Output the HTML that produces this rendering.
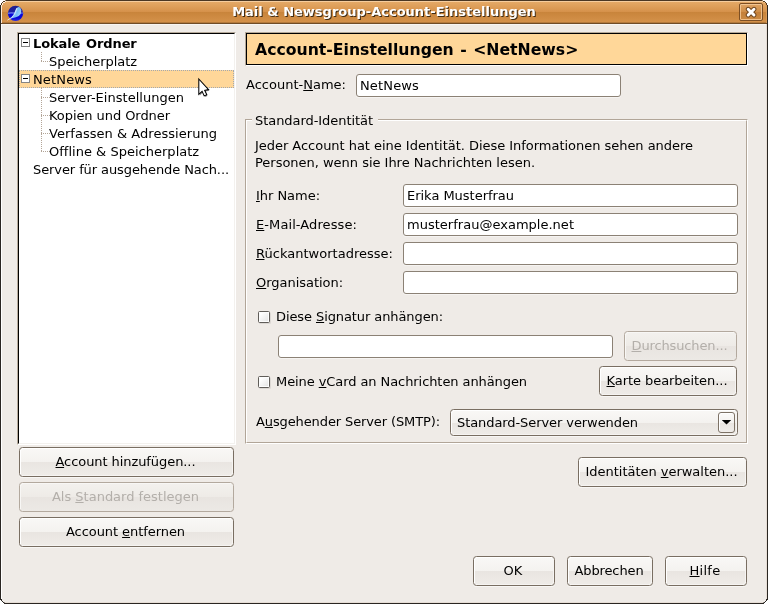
<!DOCTYPE html>
<html lang="de">
<head>
<meta charset="utf-8">
<title>Mail &amp; Newsgroup-Account-Einstellungen</title>
<style>
html,body{margin:0;padding:0;background:#fff;}
body{width:768px;height:604px;overflow:hidden;position:relative;
 font-family:"DejaVu Sans","Liberation Sans",sans-serif;font-size:13px;color:#000;
 -webkit-font-smoothing:antialiased;}
*{box-sizing:border-box;}
.abs{position:absolute;}
#txt{position:absolute;left:0;top:0;width:768px;height:604px;will-change:transform;}
#win{position:absolute;left:0;top:0;width:768px;height:604px;background:#efebe7;
 overflow:hidden;}
#frame{position:absolute;left:0;top:0;z-index:50;pointer-events:none;}
#frame2{position:absolute;left:1px;top:24px;width:766px;height:579px;
 border-left:1px solid #fff;border-right:1px solid #e6ddd5;border-bottom:1px solid #e6ddd5;z-index:40;}
#tbar{position:absolute;left:0;top:0;width:768px;height:24px;
 background:linear-gradient(to bottom,#4a3520 0,#4a3520 1px,#f6cd9d 1px,#f6cd9d 2px,#e4a966 2px,#d5914a 12px,#c8843b 12px,#d4914a 22px,#b47a3c 22px,#b47a3c 23px,#6f4c27 23px,#6f4c27 24px);}
#hl{position:absolute;left:1px;top:24px;width:766px;height:1px;background:#f7f5f3;}
#title{position:absolute;left:0;top:3px;width:768px;text-align:center;font-weight:bold;font-size:13px;color:#fff;
 text-shadow:1px 1px 0 #3f2c16;line-height:17px;white-space:nowrap;}
.t{position:absolute;white-space:nowrap;line-height:18px;height:18px;}
u{text-decoration:underline;text-underline-offset:1px;text-decoration-thickness:1px;}
/* tree */
#tree{position:absolute;left:17px;top:32px;width:219px;height:413px;background:#fff;
 border-top:1px solid #b5a999;border-left:1px solid #b5a999;border-right:1px solid #fff;border-bottom:1px solid #fff;}
#tree .in{position:absolute;left:0;top:0;right:0;bottom:0;border-top:1px solid #000;border-left:1px solid #000;
 border-right:1px solid #f3f1ee;border-bottom:1px solid #f3f1ee;}
.row{position:absolute;left:19px;width:215px;height:18px;}
.sel{background:#ffd799;border:1px dotted #a4a8ae;}
.exp{position:absolute;width:9px;height:9px;border:1px solid #848484;background:#fff;}
.exp i{position:absolute;left:1px;top:3px;width:5px;height:1px;background:#000;}
.dotv{position:absolute;width:1px;background-image:linear-gradient(to bottom,#b3a597 1px,transparent 1px);background-size:1px 2px;}
.doth{position:absolute;height:1px;background-image:linear-gradient(to right,#b3a597 1px,transparent 1px);background-size:2px 1px;}
/* buttons */
.btn{position:absolute;border:1px solid #796e62;border-radius:3.5px;text-align:center;white-space:nowrap;
 background:linear-gradient(to bottom,#f9f8f6 0,#f4f2ef 50%,#e9e5e1 50%,#efece8 100%);
 box-shadow:inset 1px 1px 0 #fff,inset -1px -1px 0 #f6f4f2,0 1px 0 #f8f7f5;}
.btn span{position:absolute;left:-1px;right:1px;white-space:nowrap;line-height:18px;}
.btn.dis{border-color:#b3a99e;color:#b3afaa;background:linear-gradient(to bottom,#f3f1ee 0,#eeebe7 50%,#e8e4e0 50%,#ece9e5 100%);box-shadow:inset 1px 1px 0 #f8f7f5;}
/* entries */
.ent{position:absolute;background:#fff;border:1px solid #8b8175;border-radius:3px;
 box-shadow:0 1px 0 #f6f4f2;}
.ent span{position:absolute;left:3px;white-space:nowrap;line-height:18px;}
.chk{position:absolute;width:12px;height:12px;border:1px solid #605d59;border-radius:1.5px;
 background:linear-gradient(135deg,#fff 20%,#e2e2e2 100%);box-shadow:inset 0 0 0 1px #fdfdfd,1px 1px 0 rgba(0,0,0,.08);}
/* header */
#hdr{position:absolute;left:245px;top:32px;width:503px;height:34px;
 border-top:1px solid #b5a999;border-left:1px solid #b5a999;border-right:1px solid #fff;border-bottom:1px solid #fff;}
#hdr .in{position:absolute;left:0;top:0;right:0;bottom:0;border:1px solid #000;background:#ffd799;}
#hdr span{position:absolute;left:9px;top:7px;letter-spacing:0;word-spacing:1px;font-weight:bold;font-size:15.7px;line-height:20px;white-space:nowrap;}
/* groupbox */
#grp{position:absolute;left:245px;top:119px;width:503px;height:325px;border:1px solid;border-color:#b1a598 #fff #fff #b1a598;}
#grp .in{position:absolute;left:0;top:0;right:0;bottom:0;border:1px solid;border-color:#fff #b1a598 #b1a598 #fff;}
#grplab{position:absolute;left:252px;top:112px;padding:0 5px 0 3px;background:#efebe7;line-height:18px;white-space:nowrap;}
</style>
</head>
<body>
<div id="win"><div id="txt">
 <div id="tbar"></div>
 <div id="hl"></div>
 <div class="abs" style="left:1px;top:1px;width:766px;height:22px;border-left:1px solid #fbead6;border-top:1px solid #f6cd9d;border-right:1px solid #d79a58;border-radius:5px 5px 0 0"></div>
 <div id="title">Mail &amp; Newsgroup-Account-Einstellungen</div>

 <!-- app icon -->
 <svg class="abs" style="left:0;top:0" width="28" height="24" viewBox="0 0 28 24">
  <defs>
   <linearGradient id="g1" x1="0" y1="0" x2="0" y2="1"><stop offset="0" stop-color="#20208e"/><stop offset="0.44" stop-color="#1d1da6"/><stop offset="0.5" stop-color="#0606dc"/><stop offset="0.8" stop-color="#0808d8"/><stop offset="1" stop-color="#2a2ae0"/></linearGradient>
   <linearGradient id="g2" x1="0" y1="0.2" x2="1" y2="0.6"><stop offset="0" stop-color="#e6f5ff"/><stop offset="0.35" stop-color="#a6d8fb"/><stop offset="0.7" stop-color="#78bcf6"/><stop offset="1" stop-color="#a8d6fa"/></linearGradient>
   <clipPath id="cc"><circle cx="15.5" cy="13.3" r="7.65"/></clipPath>
  </defs>
  <circle cx="15.5" cy="13.3" r="7.65" fill="url(#g1)"/>
  <path clip-path="url(#cc)" d="M7 12.7 Q11 11.9 15 12.6 L24 12.4 L24 13.6 L15 13.8 Q11 13.1 7 13.9Z" fill="#7f92f0" opacity="0.9"/>
  <path d="M7.2 20.4 Q11 18.6 13.2 15.4 Q14.6 12.5 15.4 10 Q16.2 7.2 18.6 6.9 Q20.8 7.2 21.3 10.5 Q21.5 13.8 18.8 16 Q16 17.7 12.8 18.1 Q9.8 18.9 7.2 20.4Z" fill="url(#g2)"/>
  <path d="M7.4 20.2 Q12 18 14.6 14 Q16 11 17 8" stroke="#eef8ff" stroke-width="0.8" fill="none" opacity="0.9"/>
 </svg>

 <!-- close button -->
 <div class="abs" style="left:739px;top:3px;width:24px;height:18px;border:1px solid #7d4f24;border-radius:2px;
   box-shadow:inset 0 0 0 1px rgba(246,205,158,.8);background:linear-gradient(to bottom,#dfa464 0,#cf8d47 50%,#c37f39 50%,#cb8a43 100%);"></div>
 <svg class="abs" style="left:745px;top:6px" width="12" height="12" viewBox="0 0 12 12">
  <path d="M3.2 3.2 L9 9 M9 3.2 L3.2 9" stroke="#6e451e" stroke-width="4.8" stroke-linecap="round"/>
  <path d="M3.2 3.2 L9 9 M9 3.2 L3.2 9" stroke="#fff" stroke-width="2.9" stroke-linecap="round"/>
 </svg>

 <!-- tree -->
 <div id="tree"><div class="in"></div></div>
 <div class="row sel" style="top:70px"></div>
 <div class="exp" style="left:21px;top:38px"><i></i></div>
 <div class="exp" style="left:21px;top:74px"><i></i></div>
 <div class="dotv" style="left:41px;top:52px;height:10px"></div>
 <div class="doth" style="left:41px;top:61px;width:9px"></div>
 <div class="dotv" style="left:41px;top:88px;height:64px"></div>
 <div class="doth" style="left:41px;top:97px;width:9px"></div>
 <div class="doth" style="left:41px;top:115px;width:9px"></div>
 <div class="doth" style="left:41px;top:133px;width:9px"></div>
 <div class="doth" style="left:41px;top:151px;width:9px"></div>
 <div class="t" style="left:33px;top:35px;font-weight:bold;letter-spacing:-0.1px;word-spacing:1.3px">Lokale Ordner</div>
 <div class="t" style="left:49px;top:53px;letter-spacing:-0.047px">Speicherplatz</div>
 <div class="t" style="left:33px;top:71px;letter-spacing:0.15px">NetNews</div>
 <div class="t" style="left:49px;top:89px;letter-spacing:0.019px">Server-Einstellungen</div>
 <div class="t" style="left:49px;top:107px;letter-spacing:-0.066px">Kopien und Ordner</div>
 <div class="t" style="left:49px;top:125px;letter-spacing:0.034px">Verfassen &amp; Adressierung</div>
 <div class="t" style="left:49px;top:143px;letter-spacing:0.015px">Offline &amp; Speicherplatz</div>
 <div class="t" style="left:33px;top:161px;letter-spacing:-0.091px">Server für ausgehende Nach...</div>

 <!-- cursor -->
 <svg class="abs" style="left:196px;top:76px" width="18" height="24" viewBox="0 0 18 24">
  <defs><filter id="cs" x="-30%" y="-30%" width="180%" height="180%"><feGaussianBlur stdDeviation="0.7"/></filter></defs>
  <path d="M3.8 4.2 L3.8 19.6 L7 16.6 L9.2 21 L11.4 20 L9.4 15.6 L13.4 14.8 Z" fill="#000" opacity="0.45" filter="url(#cs)"/>
  <path d="M2.8 3 L2.8 18.3 L6.1 15.3 L8.2 19.9 L10.8 18.8 L8.7 14.3 L12.6 13.6 Z" fill="#fff" stroke="#000" stroke-width="1.05" stroke-linejoin="miter"/>
 </svg>

 <!-- left buttons -->
 <div class="btn" style="left:19px;top:447px;width:215px;height:30px"><span style="top:5px;letter-spacing:-0.071px"><u>A</u>ccount hinzufügen...</span></div>
 <div class="btn dis" style="left:19px;top:482px;width:215px;height:30px"><span style="top:5px;letter-spacing:-0.011px">Als <u>S</u>tandard festlegen</span></div>
 <div class="btn" style="left:19px;top:517px;width:215px;height:30px"><span style="top:5px;letter-spacing:-0.066px">Account <u>e</u>ntfernen</span></div>

 <!-- header -->
 <div id="hdr"><div class="in"></div><span>Account-Einstellungen - &lt;NetNews&gt;</span></div>

 <!-- account name -->
 <div class="t" style="left:246px;top:76px;letter-spacing:0.006px">Account-<u>N</u>ame:</div>
 <div class="ent" style="left:356px;top:74px;width:265px;height:23px"><span style="top:2px;letter-spacing:0.15px">NetNews</span></div>

 <!-- groupbox -->
 <div id="grp"><div class="in"></div></div>
 <div id="grplab" style="letter-spacing:-0.057px">Standard-Identität</div>
 <div class="t" style="left:255px;top:137px;letter-spacing:-0.032px">Jeder Account hat eine Identität. Diese Informationen sehen andere</div>
 <div class="t" style="left:255px;top:154px;letter-spacing:-0.02px">Personen, wenn sie Ihre Nachrichten lesen.</div>

 <div class="t" style="left:256px;top:187px;letter-spacing:-0.033px"><u>I</u>hr Name:</div>
 <div class="ent" style="left:403px;top:184px;width:335px;height:23px"><span style="top:2px;letter-spacing:-0.023px">Erika Musterfrau</span></div>
 <div class="t" style="left:256px;top:216px;letter-spacing:0.092px"><u>E</u>-Mail-Adresse:</div>
 <div class="ent" style="left:403px;top:213px;width:335px;height:23px"><span style="top:2px;letter-spacing:0.015px">musterfrau@example.net</span></div>
 <div class="t" style="left:256px;top:245px;letter-spacing:0.017px"><u>R</u>ückantwortadresse:</div>
 <div class="ent" style="left:403px;top:242px;width:335px;height:23px"></div>
 <div class="t" style="left:256px;top:274px;letter-spacing:-0.035px"><u>O</u>rganisation:</div>
 <div class="ent" style="left:403px;top:271px;width:335px;height:23px"></div>

 <div class="chk" style="left:258px;top:311px"></div>
 <div class="t" style="left:276px;top:308px;letter-spacing:-0.091px">Diese <u>S</u>ignatur anhängen:</div>
 <div class="ent" style="left:278px;top:335px;width:335px;height:23px"></div>
 <div class="btn dis" style="left:624px;top:331px;width:113px;height:30px"><span style="top:5px;letter-spacing:-0.124px"><u>D</u>urchsuchen...</span></div>

 <div class="chk" style="left:258px;top:376px"></div>
 <div class="t" style="left:276px;top:373px;letter-spacing:-0.08px">Meine <u>v</u>Card an Nachrichten anhängen</div>
 <div class="btn" style="left:599px;top:366px;width:138px;height:30px"><span style="top:5px;letter-spacing:-0.053px"><u>K</u>arte bearbeiten...</span></div>

 <div class="t" style="left:256px;top:413px;letter-spacing:-0.112px">A<u>u</u>sgehender Server (SMTP):</div>
 <div class="btn" style="left:450px;top:409px;width:288px;height:27px;text-align:left"><span style="left:6px;top:4px;text-align:left;letter-spacing:-0.08px">Standard-Server verwenden</span>
  <div class="abs" style="right:2px;top:2px;width:17px;height:21px;border:1px solid #7d7266;border-radius:3px;background:linear-gradient(to bottom,#fbfaf9 0,#f3f1ee 52%,#e9e5e1 52%,#f0edea 100%);box-shadow:inset 1px 1px 0 #fff"></div>
  <svg class="abs" style="left:271px;top:10px" width="9" height="5" viewBox="0 0 9 5"><polygon points="-0.3,0 9.3,0 4.5,4.4" fill="#000"/></svg>
 </div>

 <div class="btn" style="left:578px;top:457px;width:169px;height:30px"><span style="top:5px;letter-spacing:-0.023px">Identitäten <u>v</u>erwalten...</span></div>

 <div class="btn" style="left:473px;top:556px;width:82px;height:30px"><span style="top:5px;letter-spacing:0.117px">OK</span></div>
 <div class="btn" style="left:567px;top:556px;width:86px;height:30px"><span style="top:5px;letter-spacing:-0.12px">Abbrechen</span></div>
 <div class="btn" style="left:665px;top:556px;width:82px;height:30px"><span style="top:5px;letter-spacing:0.284px"><u>H</u>ilfe</span></div>

 </div>
 <div id="frame2"></div>
</div>
<svg id="frame" width="768" height="604" viewBox="0 0 768 604" shape-rendering="crispEdges"><rect x="0" y="0" width="5" height="1" fill="#ffffff"/><rect x="763" y="0" width="5" height="1" fill="#ffffff"/><rect x="0" y="1" width="3" height="1" fill="#ffffff"/><rect x="765" y="1" width="3" height="1" fill="#ffffff"/><rect x="0" y="2" width="2" height="1" fill="#ffffff"/><rect x="766" y="2" width="2" height="1" fill="#ffffff"/><rect x="0" y="3" width="1" height="1" fill="#ffffff"/><rect x="767" y="3" width="1" height="1" fill="#ffffff"/><rect x="0" y="4" width="1" height="1" fill="#ffffff"/><rect x="767" y="4" width="1" height="1" fill="#ffffff"/><rect x="0" y="600" width="1" height="1" fill="#ffffff"/><rect x="767" y="600" width="1" height="1" fill="#ffffff"/><rect x="0" y="601" width="2" height="1" fill="#ffffff"/><rect x="766" y="601" width="2" height="1" fill="#ffffff"/><rect x="0" y="602" width="3" height="1" fill="#ffffff"/><rect x="765" y="602" width="3" height="1" fill="#ffffff"/><rect x="0" y="603" width="4" height="1" fill="#ffffff"/><rect x="764" y="603" width="4" height="1" fill="#ffffff"/><rect x="6" y="0" width="756" height="1" fill="#4a3723"/><rect x="0" y="5" width="1" height="595" fill="#2a2622"/><rect x="767" y="5" width="1" height="595" fill="#2a2622"/><rect x="4" y="603" width="760" height="1" fill="#2a2622"/><rect x="1" y="3" width="1" height="1" fill="#553a1c"/><rect x="766" y="3" width="1" height="1" fill="#553a1c"/><rect x="1" y="4" width="1" height="1" fill="#553a1c"/><rect x="766" y="4" width="1" height="1" fill="#553a1c"/><rect x="2" y="2" width="1" height="1" fill="#553a1c"/><rect x="765" y="2" width="1" height="1" fill="#553a1c"/><rect x="3" y="1" width="1" height="1" fill="#553a1c"/><rect x="764" y="1" width="1" height="1" fill="#553a1c"/><rect x="4" y="1" width="1" height="1" fill="#553a1c"/><rect x="763" y="1" width="1" height="1" fill="#553a1c"/><rect x="5" y="0" width="1" height="1" fill="#9b8468"/><rect x="762" y="0" width="1" height="1" fill="#9b8468"/><rect x="2" y="3" width="1" height="1" fill="#fdf0df"/><rect x="2" y="4" width="1" height="1" fill="#fdf0df"/><rect x="3" y="2" width="1" height="1" fill="#fdf0df"/><rect x="4" y="2" width="1" height="1" fill="#fdf0df"/><rect x="5" y="1" width="1" height="1" fill="#fdf0df"/><rect x="1" y="599" width="1" height="1" fill="#2a2622"/><rect x="766" y="599" width="1" height="1" fill="#2a2622"/><rect x="1" y="600" width="1" height="1" fill="#2a2622"/><rect x="766" y="600" width="1" height="1" fill="#2a2622"/><rect x="2" y="601" width="1" height="1" fill="#2a2622"/><rect x="765" y="601" width="1" height="1" fill="#2a2622"/><rect x="3" y="602" width="1" height="1" fill="#2a2622"/><rect x="764" y="602" width="1" height="1" fill="#2a2622"/><rect x="4" y="602" width="1" height="1" fill="#8d8781"/><rect x="763" y="602" width="1" height="1" fill="#8d8781"/></svg>
</body>
</html>
